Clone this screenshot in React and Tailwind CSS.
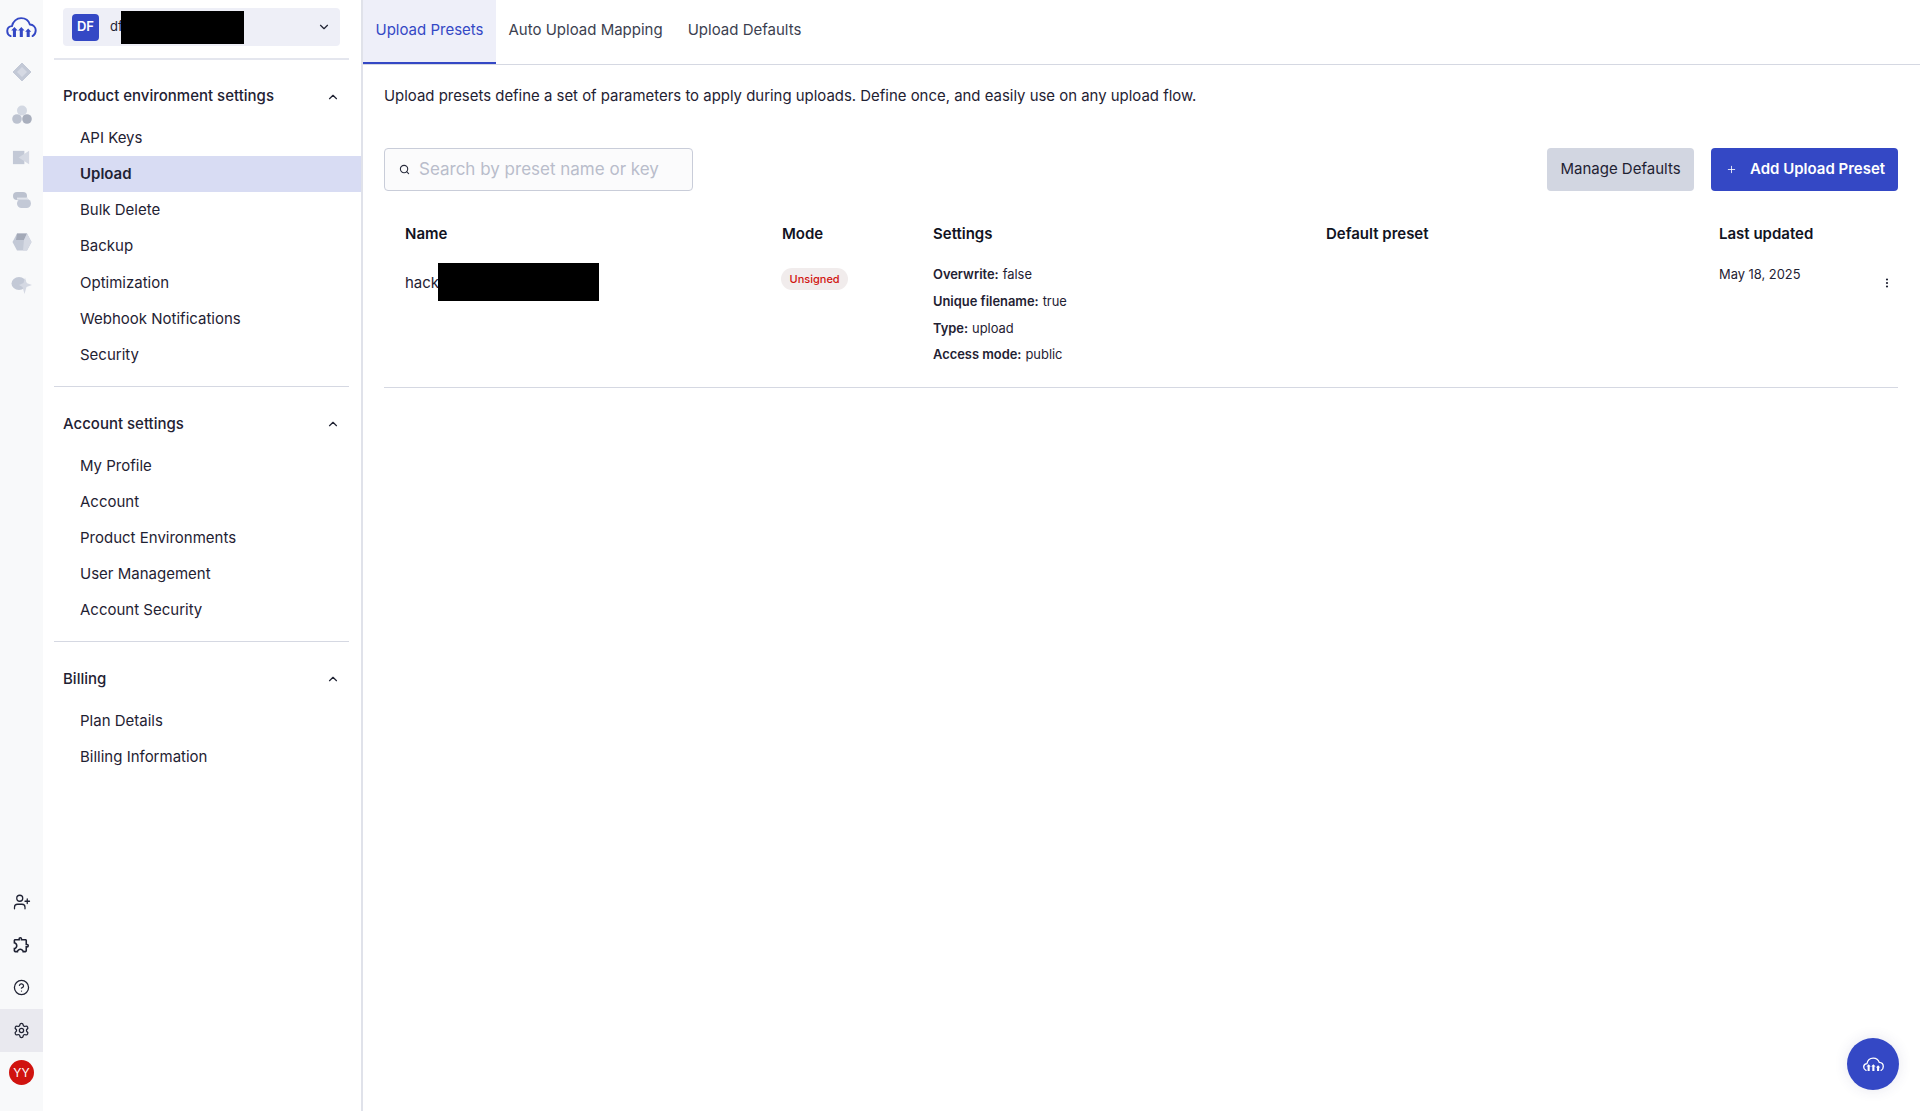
import React from "react";
import { ChevronDown, ChevronUp, Search, Plus, EllipsisVertical, UserPlus, CircleHelp, Settings } from "lucide-react";
import { MdOutlineExtension } from "react-icons/md";

function CloudLogo({ className, color = "#3448c5", bars = "#3448c5" }) {
  return (
    <svg viewBox="0 0 32 22" className={className} fill="none">
      <path d="M4.6 20 C2.2 19 0.9 16.8 1.1 14.2 C1.3 11.6 3.4 9.7 6 9.6 C7 4.6 11 1.2 15.6 1.2 C20.2 1.2 23.6 4 24.8 7.8 C28.4 8 30.9 10.8 30.9 14 C30.9 16.8 29.6 19 27.6 20" stroke={color} strokeWidth="2" strokeLinecap="round" />
      <path d="M8.6 10.5 L12 14.2 H10.2 V21 H7 V14.2 H5.2 Z M15.8 10.5 L19.2 14.2 H17.4 V21 H14.2 V14.2 H12.4 Z M23 12 L26.2 15.4 H24.6 V21 H21.4 V15.4 H19.8 Z" fill={bars} />
    </svg>
  );
}

function RailGlyph({ children }) {
  return <div className="h-[42.5px] w-full flex items-center justify-center">{children}</div>;
}

function Section({ title, items, active, listClass = "mt-[5.5px]" }) {
  return (
    <div>
      <div className="h-[37px] flex items-center justify-between pl-[20px] pr-[21px] text-[15px] font-medium text-[#1f2233]">
        <span>{title}</span>
        <ChevronUp className="w-[14px] h-[14px]" strokeWidth={2} />
      </div>
      <div className={listClass}>
        {items.map((it) => (
          <div
            key={it}
            className={
              "h-[36.2px] flex items-center pl-[37px] text-[15px] text-[#1f2233] " +
              (it === active ? "bg-[#d8dcf3] font-semibold" : "")
            }
          >
            {it}
          </div>
        ))}
      </div>
    </div>
  );
}

function Setting({ k, v }) {
  return (
    <div className="h-[26.7px] flex items-center gap-[4px] text-[12.9px] text-[#1f2233]">
      <span className="font-semibold">{k}</span>
      <span>{v}</span>
    </div>
  );
}

export default function App() {
  return (
    <div
      className="relative h-[1111px] w-full overflow-hidden flex bg-white text-[#1f2233]"
      style={{ fontFamily: "Inter, 'Liberation Sans', sans-serif" }}
    >
      {/* icon rail */}
      <div className="w-[43px] shrink-0 bg-[#f8f9fa] flex flex-col items-center">
        <div className="h-[51px] w-full flex items-end justify-center pb-[13px]">
          <CloudLogo className="w-[31px] h-[21px]" />
        </div>
        <RailGlyph>
          <svg viewBox="0 0 20 20" className="w-[20px] h-[20px]">
            <path d="M10 1 L19 10 L10 19 L1 10 Z" fill="#c3c9d6" stroke="#c3c9d6" strokeLinejoin="round" />
            <path d="M10 5 L15 10 L10 15 L5 10 Z" fill="#d5d9e3" />
          </svg>
        </RailGlyph>
        <RailGlyph>
          <svg viewBox="0 0 20 20" className="w-[20px] h-[20px]">
            <circle cx="10" cy="5.5" r="5" fill="#d3d8e2" />
            <circle cx="5" cy="14" r="4.8" fill="#bcc2cf" />
            <circle cx="15" cy="14" r="4.8" fill="#a9afbd" />
          </svg>
        </RailGlyph>
        <RailGlyph>
          <svg viewBox="0 0 20 20" className="w-[19px] h-[19px]">
            <rect x="1" y="3" width="12" height="14" fill="#c3c9d6" />
            <path d="M7 10 L18 3 V17 Z" fill="#d5d9e3" />
          </svg>
        </RailGlyph>
        <RailGlyph>
          <svg viewBox="0 0 20 20" className="w-[20px] h-[20px]">
            <rect x="1" y="2" width="14" height="8" rx="4" fill="#bcc2cf" />
            <rect x="5" y="9" width="14" height="9" rx="4.5" fill="#c3c9d6" />
            <rect x="5" y="7.6" width="11" height="2" fill="#e2e5ec" />
          </svg>
        </RailGlyph>
        <RailGlyph>
          <svg viewBox="0 0 20 20" className="w-[20px] h-[20px]">
            <path d="M5 1.5 H15 L19.5 10 L15 18.5 H5 L0.5 10 Z" fill="#c3c9d6" />
            <path d="M5 1.5 H15 L12 8 H4 Z" fill="#a3a9b7" />
            <path d="M12 8 L15 1.5 L19.5 10 L15 18.5 H11 Z" fill="#d5d9e3" />
          </svg>
        </RailGlyph>
        <RailGlyph>
          <svg viewBox="0 0 22 20" className="w-[22px] h-[20px]">
            <ellipse cx="8" cy="8.5" rx="7.5" ry="6.5" fill="#c3c9d6" />
            <path d="M14 2.5 L15.5 8 L21 10 L15.5 12 L13.5 19 L11.5 12 L8 10 L12.5 8 Z" fill="#d5d9e3" />
          </svg>
        </RailGlyph>
        <div className="mt-auto w-full flex flex-col items-center pb-[26px]">
          <div className="h-[42px] w-full flex items-center justify-center">
            <UserPlus className="w-[18px] h-[18px]" strokeWidth={1.7} />
          </div>
          <div className="h-[43px] w-full flex items-center justify-center">
            <MdOutlineExtension className="w-[19px] h-[19px]" />
          </div>
          <div className="h-[42px] mb-[1px] w-full flex items-center justify-center">
            <CircleHelp className="w-[17px] h-[17px]" strokeWidth={1.8} />
          </div>
          <div className="h-[43px] w-full flex items-center justify-center bg-[#e9e9ef]">
            <Settings className="w-[17px] h-[17px]" strokeWidth={1.8} />
          </div>
          <div className="mt-[8px] w-[25px] h-[25px] rounded-full bg-[#d0130f] text-white text-[12px] flex items-center justify-center">
            YY
          </div>
        </div>
      </div>

      {/* settings sidebar */}
      <div className="w-[320px] shrink-0 border-r-2 border-[#e0e2ea]">
        <div className="pt-[8px] pl-[11px] pr-[12px]">
          <div className="ml-[9px] mr-[9px] h-[38px] rounded-[4px] bg-[#eeeff7] flex items-center pl-[9px] pr-[9px]">
            <div className="w-[27px] h-[27px] rounded-[4px] bg-[#3448c5] text-white text-[13px] font-semibold flex items-center justify-center">
              DF
            </div>
            <span className="ml-[11px] text-[13px] w-[11px] whitespace-nowrap">df</span>
            <div className="w-[123px] h-[33px] bg-black relative" />
            <ChevronDown className="ml-auto w-[14px] h-[14px]" strokeWidth={2} />
          </div>
          <div className="mt-[12px] h-[2px] bg-[#e4e6ee]" />
        </div>
        <div className="mt-[18px]">
          <Section
            title="Product environment settings"
            active="Upload"
            listClass="mt-[5px]"
            items={["API Keys", "Upload", "Bulk Delete", "Backup", "Optimization", "Webhook Notifications", "Security"]}
          />
        </div>
        <div className="ml-[11px] mr-[12px] mt-[13px] h-px bg-[#d5d8e2]" />
        <div className="mt-[18px]">
          <Section title="Account settings" items={["My Profile", "Account", "Product Environments", "User Management", "Account Security"]} />
        </div>
        <div className="ml-[11px] mr-[12px] mt-[12.5px] h-px bg-[#d5d8e2]" />
        <div className="mt-[18px]">
          <Section title="Billing" items={["Plan Details", "Billing Information"]} />
        </div>
      </div>

      {/* main */}
      <div className="flex-1 min-w-0">
        <div className="h-[65px] border-b border-[#d5d8e2] flex text-[15px]">
          <div className="h-[64px] w-[133px] pb-[2px] bg-[#eeeff9] border-b-2 border-[#3448c5] text-[#3448c5] flex items-center justify-center">
            Upload Presets
          </div>
          <div className="h-[61px] px-[12.5px] flex items-center text-[#3c3f50]">Auto Upload Mapping</div>
          <div className="h-[61px] px-[12.5px] flex items-center text-[#3c3f50]">Upload Defaults</div>
        </div>
        <div className="pl-[21px] pr-[22px]">
          <p className="mt-[20px] h-[22px] leading-[22px] text-[14.93px] text-[#1f2233]">
            Upload presets define a set of parameters to apply during uploads. Define once, and easily use on any upload flow.
          </p>
          <div className="mt-[41px] flex items-center">
            <div className="w-[309px] h-[43px] rounded-[4px] border border-[#c9cdd9] bg-[#fbfbfc] flex items-center pl-[14px]">
              <Search className="w-[11px] h-[11px] text-[#2a2d3d]" strokeWidth={2.4} />
              <span className="ml-[9px] pt-[1px] text-[17px] text-[#b9bdcb]">Search by preset name or key</span>
            </div>
            <div className="ml-auto w-[147px] h-[43px] rounded-[4px] bg-[#d2d6e1] flex items-center justify-center text-[15px] text-[#1f2233]">
              Manage Defaults
            </div>
            <div className="ml-[17px] w-[187px] h-[43px] rounded-[4px] bg-[#3448c5] text-white flex items-center pl-[15px] text-[15px] font-semibold">
              <Plus className="w-[11px] h-[11px]" strokeWidth={1.8} />
              <span className="ml-[13px]">Add Upload Preset</span>
            </div>
          </div>
          <div className="mt-[32px] grid grid-cols-[377px_151px_393px_393px_1fr] pl-[21px] h-[22px] items-center text-[15px] font-semibold text-[#111322]">
            <div>Name</div>
            <div>Mode</div>
            <div>Settings</div>
            <div>Default preset</div>
            <div>Last updated</div>
          </div>
          <div className="mt-[18px] grid grid-cols-[377px_151px_393px_393px_1fr] pl-[21px] h-[125px] border-b border-[#d5d8e2]">
            <div className="flex items-start text-[15px]">
              <span className="mt-[8px] leading-[24px] w-[33px] whitespace-nowrap">hack</span>
              <div className="w-[161px] h-[38px] bg-black relative" />
            </div>
            <div className="pt-[2px]">
              <span className="inline-flex items-center h-[22px] px-[8.5px] -ml-px rounded-full bg-[#f1ecec] text-[#d0130f] text-[11px] font-medium">
                Unsigned
              </span>
            </div>
            <div className="-mt-[1.5px]">
              <Setting k="Overwrite:" v="false" />
              <Setting k="Unique filename:" v="true" />
              <Setting k="Type:" v="upload" />
              <Setting k="Access mode:" v="public" />
            </div>
            <div />
            <div className="relative">
              <div className="h-[24px] flex items-center text-[12.9px]">May 18, 2025</div>
              <EllipsisVertical className="absolute right-[5px] top-[14px] w-[12px] h-[12px]" strokeWidth={2.4} />
            </div>
          </div>
        </div>
      </div>

      <div className="absolute right-[21px] bottom-[21px] w-[52px] h-[52px] rounded-full bg-[#3448c5] flex items-center justify-center shadow-[0_0_14px_rgba(60,60,120,0.12)]">
        <CloudLogo className="w-[21px] h-[15px]" color="#ffffff" bars="#ffffff" />
      </div>
    </div>
  );
}
